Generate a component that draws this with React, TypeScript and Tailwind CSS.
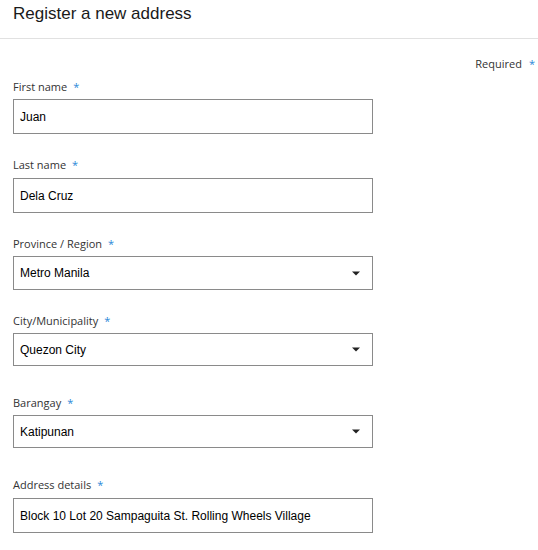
import React from "react";

const labelFont = { fontFamily: '"Open Sans", "Noto Sans", sans-serif' };

function Label({ text }: { text: string }) {
  return (
    <div className="flex h-4 items-center text-[11px] leading-4 text-[#333]" style={labelFont}>
      <span>{text}</span>
      <span className="ml-[6px] text-[#2b88d8]">*</span>
    </div>
  );
}

function TextField({ label, value, gap = "mt-1" }: { label: string; value: string; gap?: string }) {
  return (
    <div>
      <Label text={label} />
      <div
        className={`${gap} flex h-[35px] w-[360px] items-center border border-[#8a8a8a] px-[6px] pt-px text-[12px] text-black`}
      >
        {value}
      </div>
    </div>
  );
}

function SelectField({ label, value, h = "h-[34px]" }: { label: string; value: string; h?: string }) {
  return (
    <div>
      <Label text={label} />
      <div
        className={`mt-1 flex ${h} w-[360px] items-center justify-between border border-[#8a8a8a] pl-[6px] pr-[12px] text-[12px] text-black`}
      >
        <span>{value}</span>
        <svg width="8" height="5" viewBox="0 0 8 5">
          <path d="M0 0.5 H8 L4 4.5 Z" fill="#222" />
        </svg>
      </div>
    </div>
  );
}

export default function App() {
  return (
    <div className="w-[538px] bg-white" style={{ fontFamily: '"Liberation Sans", Arial, sans-serif' }}>
      <div className="h-[39px] border-b border-[#e1e1e1] px-[13px] pt-[3px]">
        <h1 className="text-[17px] leading-[22px] text-[#1a1a1a]">Register a new address</h1>
      </div>

      <div className="mt-[17px] flex h-4 items-center justify-end pr-[3px] text-[11px] text-[#333]" style={labelFont}>
        <span>Required</span>
        <span className="ml-[7px] text-[#2b88d8]">*</span>
      </div>

      <div className="mt-[7px] flex flex-col px-[13px] pb-4">
        <TextField label="First name" value="Juan" />
        <div className="mt-[23px]">
          <TextField label="Last name" value="Dela Cruz" gap="mt-[5px]" />
        </div>
        <div className="mt-[23px]">
          <SelectField label="Province / Region" value="Metro Manila" />
        </div>
        <div className="mt-[23px]">
          <SelectField label="City/Municipality" value="Quezon City" h="h-[33px]" />
        </div>
        <div className="mt-[29px]">
          <SelectField label="Barangay" value="Katipunan" h="h-[33px]" />
        </div>
        <div className="mt-[29px]">
          <TextField label="Address details" value="Block 10 Lot 20 Sampaguita St. Rolling Wheels Village" gap="mt-[5px]" />
        </div>
      </div>
    </div>
  );
}
